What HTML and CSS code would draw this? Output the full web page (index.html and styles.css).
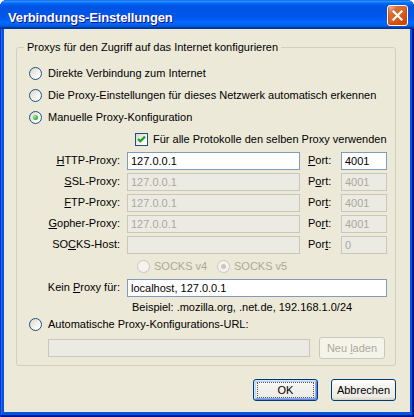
FILE: index.html
```html
<!DOCTYPE html>
<html lang="de">
<head>
<meta charset="utf-8">
<title>Verbindungs-Einstellungen</title>
<link rel="stylesheet" href="styles.css">
</head>
<body>
<div class="window">
  <div class="titlebar">
    <span class="title">Verbindungs-Einstellungen</span>
    <span class="close">
      <svg width="21" height="21" viewBox="0 0 21 21"><path d="M6.5 6.5 L14.5 14.5 M14.5 6.5 L6.5 14.5" stroke="#fff" stroke-width="2.2" stroke-linecap="square"/></svg>
    </span>
  </div>
  <div class="client">
    <fieldset class="group">
      <legend>Proxys für den Zugriff auf das Internet konfigurieren</legend>
      <div class="opt-row"><span class="radio"></span><span>Direkte Verbindung zum Internet</span></div>
      <div class="opt-row"><span class="radio"></span><span>Die Proxy-Einstellungen für dieses Netzwerk automatisch erkennen</span></div>
      <div class="opt-row"><span class="radio on"></span><span>Manuelle Proxy-Konfiguration</span></div>
      <div class="opt-row check-row"><span class="check"><svg width="11" height="11" viewBox="0 0 11 11"><path d="M2 5 L4.3 7.3 L9 2.6" fill="none" stroke="#21A121" stroke-width="2.2"/></svg></span><span>Für alle Protokolle den selben Proxy verwenden</span></div>
      <div class="proxy-grid">
        <span class="lbl"><u>H</u>TTP-Proxy:</span><span class="field">127.0.0.1</span><span class="plbl"><u>P</u>ort:</span><span class="field">4001</span>
        <span class="lbl"><u>S</u>SL-Proxy:</span><span class="field off">127.0.0.1</span><span class="plbl">P<u>o</u>rt:</span><span class="field off">4001</span>
        <span class="lbl"><u>F</u>TP-Proxy:</span><span class="field off">127.0.0.1</span><span class="plbl">Por<u>t</u>:</span><span class="field off">4001</span>
        <span class="lbl"><u>G</u>opher-Proxy:</span><span class="field off">127.0.0.1</span><span class="plbl">Po<u>r</u>t:</span><span class="field off">4001</span>
        <span class="lbl">SO<u>C</u>KS-Host:</span><span class="field off"></span><span class="plbl">Por<u>t</u>:</span><span class="field off">0</span>
      </div>
      <div class="socks-row">
        <span class="socks-opt"><span class="radio off"></span><span>SOCKS v4</span></span>
        <span class="socks-opt"><span class="radio off on"></span><span>SOCKS v5</span></span>
      </div>
      <div class="noproxy-row">
        <span class="lbl">Kein <u>P</u>roxy für:</span><span class="field wide">localhost, 127.0.0.1</span>
      </div>
      <div class="example">Beispiel: .mozilla.org, .net.de, 192.168.1.0/24</div>
      <div class="opt-row auto-row"><span class="radio"></span><span>Automatische Proxy-Konfigurations-URL:</span></div>
      <div class="url-row">
        <span class="field off url"></span>
        <span class="btn disabled"><span>Neu <u>l</u>aden</span></span>
      </div>
    </fieldset>
    <div class="buttons">
      <span class="btn default"><span class="focus">OK</span></span>
      <span class="btn"><span>Abbrechen</span></span>
    </div>
  </div>
</div>
</body>
</html>
```

FILE: styles.css
```css
* { box-sizing: border-box; }
html, body { margin: 0; padding: 0; background: #ffffff; }
body {
  font-family: "Liberation Sans", Arial, sans-serif;
  font-size: 11px;
  line-height: 13px;
  color: #000;
}
u { text-decoration: underline; text-underline-offset: 1px; }

.window {
  width: 414px;
  height: 417px;
  display: flex;
  flex-direction: column;
  background: #0855dd;
  border-radius: 7px 7px 0 0;
  box-shadow: inset 1px 0 #0831d9, inset -1px -1px #00138c, inset -2px -2px #001ea0, inset 2px 0 #166aee;
  overflow: hidden;
}

.titlebar {
  height: 29px;
  flex: none;
  display: flex;
  align-items: flex-start;
  justify-content: space-between;
  padding: 5px 6px 0 8px;
  background: linear-gradient(180deg, #0058ee 0%, #3593ff 4%, #288eff 6%, #127dff 8%, #036ffc 10%, #0262ee 14%, #0057e5 20%, #0054e3 24%, #0055eb 56%, #005bf5 66%, #026afe 76%, #0062ef 86%, #0052d6 92%, #0040ab 94%, #003092 100%);
}
.title {
  color: #fff;
  font-weight: bold;
  font-size: 13px;
  line-height: 15px;
  margin-top: 5px;
  letter-spacing: -0.15px;
  text-shadow: 1px 1px #0f1089;
}
.close {
  width: 21px;
  height: 21px;
  border: 1px solid #fff;
  border-radius: 3px;
  background: radial-gradient(circle at 85% 85%, #cc4600 0%, #dc6527 55%, #cd7546 70%, #ffccb2 95%, #fff 100%);
  box-shadow: inset 0 -1px 2px 1px #da4600;
  display: grid;
  place-items: center;
}
.close svg { display: block; margin: -1px; }

.client {
  flex: 1;
  margin: 0 4px 5px 4px;
  background: #ece9d8;
  padding: 12px 14px 11px 12px;
  display: flex;
  flex-direction: column;
}

.group {
  margin: 0;
  border: 1px solid #d0d0bf;
  border-radius: 3px;
  padding: 8px 8px 6px 12px;
  min-width: 0;
}
.group legend {
  padding: 0 3px;
  margin-left: -5px;
  line-height: 13px;
  color: #000;
}

.opt-row {
  height: 22px;
  display: flex;
  align-items: center;
  gap: 6px;
  white-space: nowrap;
}
.check-row { padding-left: 106px; gap: 5px; }
.auto-row { height: 17px; }

.radio {
  width: 13px;
  height: 13px;
  flex: none;
  border-radius: 50%;
  border: 1px solid #1c5180;
  background: linear-gradient(135deg, #dcd7cb 0%, #f3f2ec 55%, #ffffff 90%);
  display: grid;
  place-items: center;
}
.radio.on::after {
  content: "";
  width: 5px;
  height: 5px;
  border-radius: 50%;
  background: radial-gradient(circle at 35% 35%, #a8eba9 0%, #4cc04e 45%, #1f9a1f 100%);
}
.radio.off {
  border-color: #cac8bb;
  background: #f4f3ee;
}
.radio.off.on::after { background: #cac8bb; }

.check {
  width: 13px;
  height: 13px;
  flex: none;
  border: 1px solid #1c5180;
  background: linear-gradient(135deg, #dcd7cb 0%, #f3f2ec 55%, #ffffff 90%);
}
.check svg { display: block; }

.proxy-grid {
  display: grid;
  grid-template-columns: 91px 173px 27px 46px;
  grid-auto-rows: 21px;
  column-gap: 7px;
  align-items: center;
}
.lbl { text-align: right; white-space: nowrap; }
.plbl { white-space: nowrap; margin-left: 1px; }

.field {
  height: 18px;
  border: 1px solid #7f9db9;
  background: #fff;
  padding: 1px 3px 0 3px;
  line-height: 15px;
  white-space: nowrap;
  overflow: hidden;
  display: block;
}
.field.off {
  border-color: #c9c7ba;
  background: #ebebe4;
  color: #aca899;
}

.socks-row {
  height: 22px;
  display: flex;
  align-items: center;
  padding-left: 108px;
  color: #aca899;
}
.socks-opt {
  display: flex;
  align-items: center;
  gap: 4px;
  width: 80px;
}

.noproxy-row {
  height: 21px;
  display: grid;
  grid-template-columns: 91px 260px;
  column-gap: 7px;
  align-items: center;
}

.example {
  height: 18px;
  line-height: 18px;
  padding-left: 103px;
  white-space: nowrap;
}

.url-row {
  margin-top: 4px;
  height: 22px;
  display: flex;
  align-items: center;
  gap: 9px;
  padding-left: 19px;
}
.field.url { width: 262px; }

.btn {
  height: 22px;
  border: 1px solid #003c74;
  border-radius: 3px;
  background: linear-gradient(180deg, #ffffff 0%, #f4f3ee 30%, #ecebe6 85%, #d6d0c5 100%);
  display: flex;
  align-items: center;
  justify-content: center;
  white-space: nowrap;
}
.url-row .btn { width: 66px; }
.btn.disabled {
  border-color: #c9c7ba;
  background: #f5f4ea;
  color: #aca899;
}

.buttons {
  margin-top: 13px;
  display: flex;
  justify-content: flex-end;
  gap: 13px;
}
.buttons .btn { width: 65px; }
.btn.default {
  box-shadow: inset 1px 1px #cee7ff, inset -1px -1px #6982ee, inset 2px 2px #bcd4f6, inset -2px -2px #89ade4;
}
.focus {
  width: 57px;
  height: 16px;
  border: 1px dotted #555;
  display: flex;
  align-items: center;
  justify-content: center;
}
```
